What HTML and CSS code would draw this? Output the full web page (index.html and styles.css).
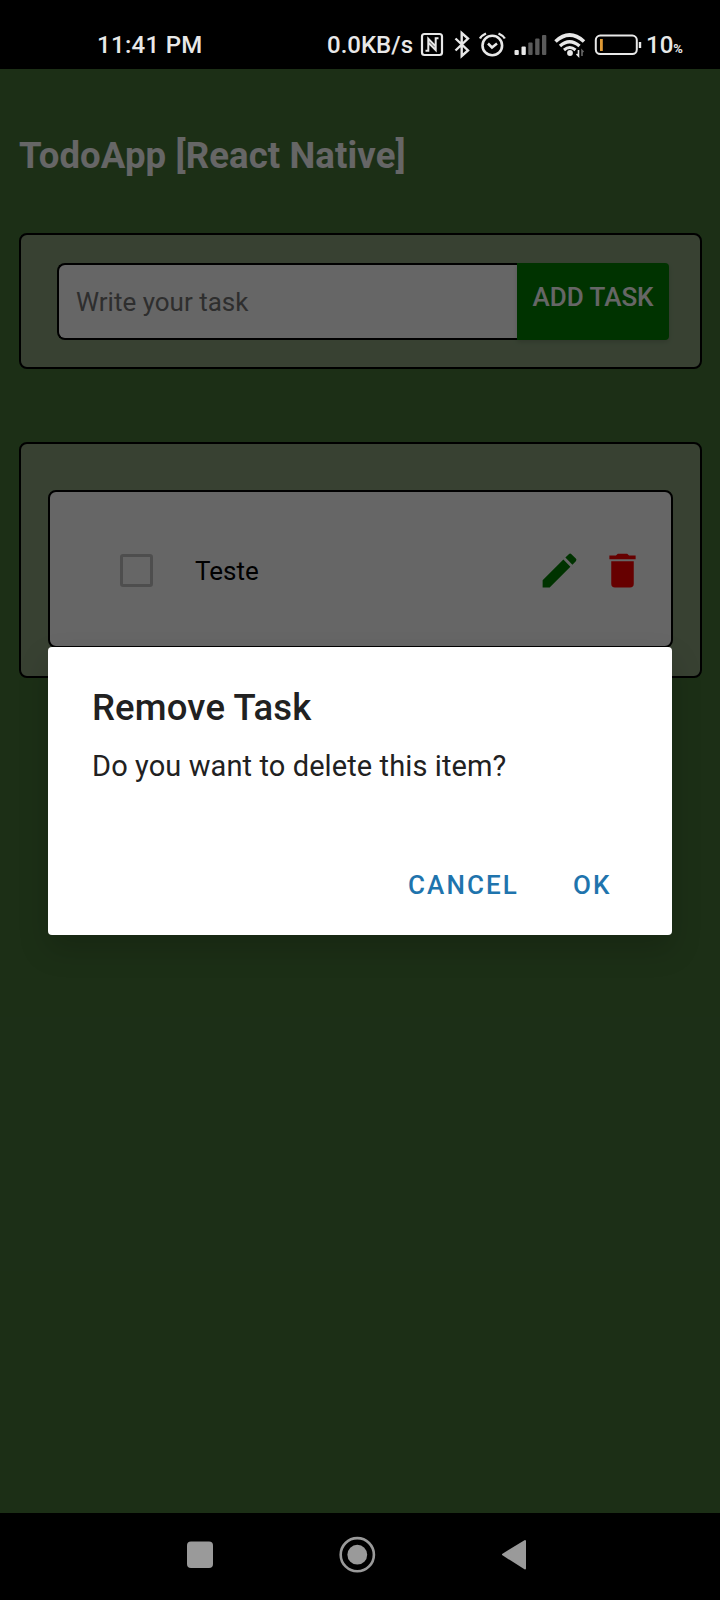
FILE: index.html
```html
<!DOCTYPE html>
<html lang="en">
<head>
<meta charset="utf-8">
<title>TodoApp</title>
<link rel="stylesheet" href="styles.css">
</head>
<body>
<div class="screen">
  <header class="status">
    <span class="clock">11:41 PM</span>
    <div class="indicators">
      <span class="speed">0.0KB/s</span>
      <svg class="status-icons" width="224" height="30" viewBox="418 30 224 30" fill="none" stroke="#e8e8e8" stroke-width="2.2">
        <rect x="422" y="34" width="20" height="21" rx="2.500"/>
        <path d="M425.500 50.700H428.300V38.800L435.700 46.500M438.500 38.300H435.700V50L428.300 42.500" stroke-width="2"/>
        <path d="M455.500 38.500L468 50.500L461.700 56V33L468 38.500L455.500 50.500" stroke-width="2.400"/>
        <circle cx="492.300" cy="45.500" r="9.800" stroke-width="2.600"/>
        <path d="M488 43.500L492 47.500L497 43.500" stroke-width="2.500"/>
        <path d="M480 38.500Q481.500 35.500 486 33.500M504.800 38.500Q503 35.500 498.500 33.500" stroke-width="2.400"/>
        <g stroke="none" fill="#e8e8e8">
          <rect x="514.500" y="50" width="4.300" height="5" rx="1"/>
          <rect x="521.500" y="46.500" width="4.300" height="8.500" rx="1"/>
          <g fill="#5a5a5a"><rect x="528.300" y="42.500" width="4.300" height="12.500" rx="1"/><rect x="535.200" y="38.500" width="4.300" height="16.500" rx="1"/><rect x="542" y="35" width="4.300" height="20" rx="1"/></g>
        </g>
        <path d="M555.500 41.500Q569.500 28.500 584 41.500" stroke-width="3.600"/>
        <path d="M560 46Q569.500 37.500 579.500 46" stroke-width="3.400"/>
        <path d="M564 50Q569.700 45 575.500 50" stroke-width="3"/>
        <circle cx="570" cy="53" r="2.900" fill="#e8e8e8" stroke="none"/>
        <path d="M578.500 50V56L576.500 54" stroke-width="1.600"/>
        <path d="M582 56V50.500L583.500 52" stroke="#666" stroke-width="1.600"/>
        <rect x="595.800" y="35.600" width="41" height="18.500" rx="4.500" stroke-width="2"/>
        <rect x="600" y="39" width="2.800" height="12" fill="#e09a35" stroke="none"/>
        <path d="M640 42V48" stroke-width="2.400"/>
      </svg>
      <span class="battery">10<small>%</small></span>
    </div>
  </header>
  <main class="app">
    <h1 class="heading">TodoApp [React Native]</h1>
    <section class="card composer">
      <div class="field">Write your task</div>
      <div class="add"><span>ADD TASK</span></div>
    </section>
    <section class="card list">
      <div class="item">
        <span class="check"></span>
        <span class="label">Teste</span>
        <svg class="edit" width="45" height="45" viewBox="0 0 24 24"><path d="M3 17.250V21h3.750L17.810 9.940l-3.750-3.750L3 17.250zM20.710 7.040a1 1 0 0 0 0-1.410l-2.340-2.340a1 1 0 0 0-1.410 0l-1.830 1.830 3.750 3.750 1.830-1.830z"/></svg>
        <svg class="trash" width="45" height="45" viewBox="0 0 24 24"><path d="M6 19a2 2 0 0 0 2 2h8a2 2 0 0 0 2-2V7H6v12zM19 4h-3.500l-1-1h-5l-1 1H5v2h14V4z"/></svg>
      </div>
    </section>
    <div class="scrim">
      <div class="dialog">
        <h2 class="dialog-title">Remove Task</h2>
        <p class="message">Do you want to delete this item?</p>
        <div class="actions"><span class="cancel">CANCEL</span><span class="ok">OK</span></div>
      </div>
    </div>
  </main>
  <footer class="nav">
    <svg width="340" height="40" viewBox="187 1535 340 40" fill="#9a9a9a">
      <rect x="187" y="1541.500" width="26" height="26.500" rx="4"/>
      <circle cx="357.300" cy="1554.700" r="16.600" fill="none" stroke="#9a9a9a" stroke-width="2.600"/>
      <circle cx="357.300" cy="1554.700" r="9.900"/>
      <path d="M503 1554.500L525 1541V1568.500Z" stroke="#9a9a9a" stroke-width="2" stroke-linejoin="round"/>
    </svg>
  </footer>
</div>
</body>
</html>
```

FILE: styles.css
```css
* { box-sizing: border-box; }
body { margin: 0; background: #000; font-family: Roboto, "Liberation Sans", sans-serif; }
.screen { width: 720px; height: 1600px; display: flex; flex-direction: column; overflow: hidden; }
.status { height: 69px; padding: 30px 35px 0 97px; display: flex; justify-content: space-between; color: #e8e8e8; font-size: 24px; line-height: 31px; font-weight: 500; background: #000; }
.clock { letter-spacing: .3px; }
.indicators { display: flex; }
.speed { width: 91px; white-space: nowrap; }
.status-icons { flex: none; }
.battery { width: 43px; padding-left: 4px; white-space: nowrap; }
.battery small { font-size: 13px; font-weight: 700; }

.app { position: relative; height: 1444px; padding: 65px 18px 0 19px; background: #467539; }
.heading { margin: 0; height: 44px; font-size: 36.5px; line-height: 44px; font-weight: 700; letter-spacing: .13px; color: #fff; white-space: nowrap; }
.card { border: 2px solid #000; border-radius: 8px; background: #8ca47e; }
.composer { margin-top: 55px; height: 136px; padding: 28px 31px 0 36px; display: flex; }
.field { flex: 1; height: 77px; padding-left: 17px; border: 2px solid #000; border-right: 0; border-radius: 8px 0 0 8px; background: #fff; color: #737373; font-size: 26px; line-height: 75px; }
.add { width: 152px; height: 77px; padding-top: 18px; text-align: center; background: green; border-radius: 0 4px 4px 0; box-shadow: 0 2px 5px rgba(0, 0, 0, .15); color: #fff; font-size: 26px; line-height: 32px; font-weight: 500; white-space: nowrap; }
.list { margin-top: 73px; height: 236px; padding: 46px 27px 0; }
.item { height: 158px; padding: 2px 26px 0 70px; display: flex; align-items: center; border: 2px solid #000; border-radius: 8px; background: #fff; }
.check { width: 33px; height: 33px; border: 3px solid #c4c4c4; border-radius: 3px; }
.label { margin: 2px 0 0 42px; flex: 1; font-size: 26px; line-height: 32px; color: #000; }
.edit { fill: green; margin-right: 18px; }
.trash { fill: red; }

.scrim { position: absolute; inset: 0; padding: 578px 48px 0; background: rgba(0, 0, 0, .6); }
.dialog { height: 288px; padding: 42px 44px 0; border-radius: 4px; background: #fff; box-shadow: 0 14px 30px rgba(0, 0, 0, .17); color: #212121; }
.dialog-title { margin: 0; font-size: 36.5px; line-height: 38px; font-weight: 500; letter-spacing: .15px; white-space: nowrap; }
.message { margin: 21px 0 0; font-size: 29px; line-height: 36px; letter-spacing: .1px; white-space: nowrap; }
.actions { margin-top: 85px; display: flex; color: #1f74ad; font-size: 26px; line-height: 32px; font-weight: 500; letter-spacing: 2.1px; }
.cancel { margin-left: 316px; width: 165px; }

.nav { height: 87px; padding: 22px 0 0 187px; background: #000; }
```
